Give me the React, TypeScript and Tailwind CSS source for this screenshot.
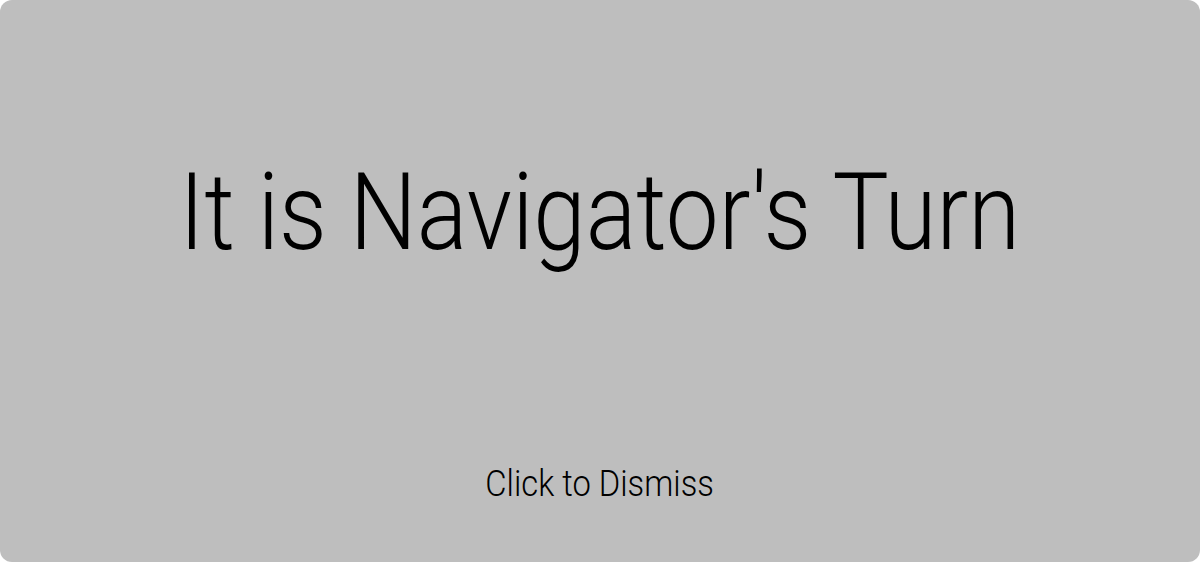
export default function App() {
  return (
    <div className="h-[563px] w-full bg-white font-['Roboto',sans-serif]">
      {/* Turn notice panel */}
      <div className="flex h-[562px] w-[1200px] cursor-pointer flex-col items-center rounded-xl bg-[#bebebe] pt-[159px] text-black">
        <h1 className="scale-x-[0.882] whitespace-nowrap text-[107px] font-light leading-none">
          It is Navigator's Turn
        </h1>
        <p className="mt-[200px] scale-x-[0.91] whitespace-nowrap text-[36px] font-light leading-none">
          Click to Dismiss
        </p>
      </div>
    </div>
  );
}
